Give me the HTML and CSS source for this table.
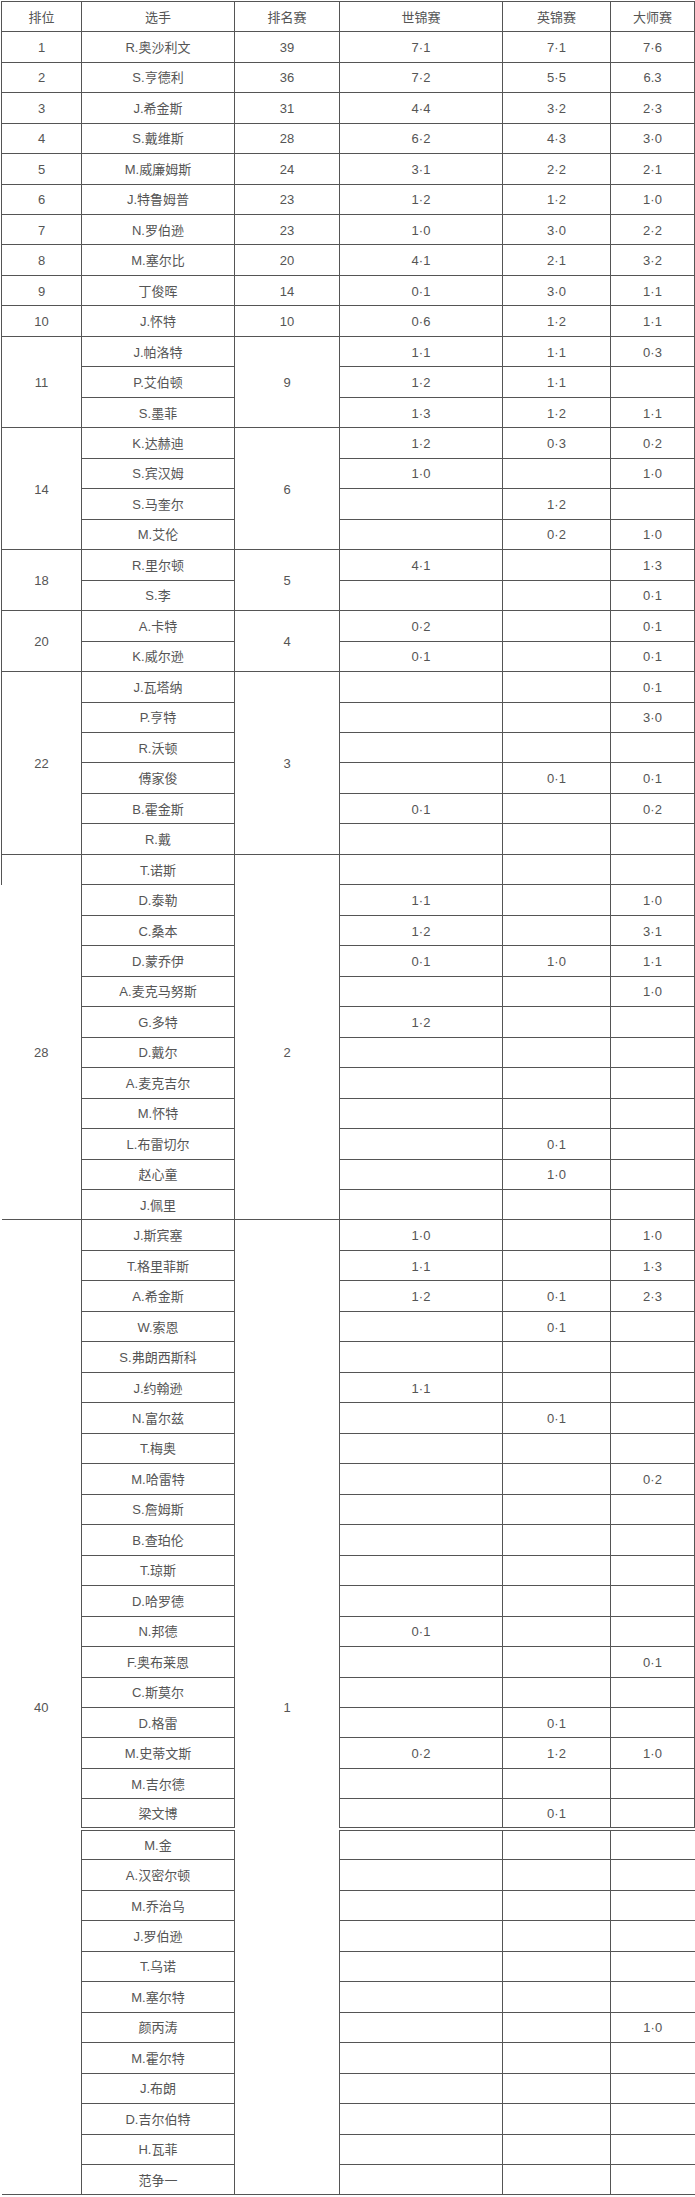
FILE: index.html
```html
<!DOCTYPE html>
<html lang="zh">
<head>
<meta charset="utf-8">
<title>排名赛冠军榜</title>
<link rel="stylesheet" href="styles.css">
</head>
<body>
<table class="rank-table">
  <colgroup>
    <col class="c-rank"><col class="c-player"><col class="c-titles"><col class="c-world"><col class="c-uk"><col class="c-masters">
  </colgroup>
  <thead>
    <tr><th>排位</th><th>选手</th><th>排名赛</th><th>世锦赛</th><th>英锦赛</th><th>大师赛</th></tr>
  </thead>
  <tbody>
    <tr><td>1</td><td>R.奥沙利文</td><td>39</td><td>7·1</td><td>7·1</td><td>7·6</td></tr>
    <tr><td>2</td><td>S.亨德利</td><td>36</td><td>7·2</td><td>5·5</td><td>6.3</td></tr>
    <tr><td>3</td><td>J.希金斯</td><td>31</td><td>4·4</td><td>3·2</td><td>2·3</td></tr>
    <tr><td>4</td><td>S.戴维斯</td><td>28</td><td>6·2</td><td>4·3</td><td>3·0</td></tr>
    <tr><td>5</td><td>M.威廉姆斯</td><td>24</td><td>3·1</td><td>2·2</td><td>2·1</td></tr>
    <tr><td>6</td><td>J.特鲁姆普</td><td>23</td><td>1·2</td><td>1·2</td><td>1·0</td></tr>
    <tr><td>7</td><td>N.罗伯逊</td><td>23</td><td>1·0</td><td>3·0</td><td>2·2</td></tr>
    <tr><td>8</td><td>M.塞尔比</td><td>20</td><td>4·1</td><td>2·1</td><td>3·2</td></tr>
    <tr><td>9</td><td>丁俊晖</td><td>14</td><td>0·1</td><td>3·0</td><td>1·1</td></tr>
    <tr><td>10</td><td>J.怀特</td><td>10</td><td>0·6</td><td>1·2</td><td>1·1</td></tr>

    <tr><td rowspan="3">11</td><td>J.帕洛特</td><td rowspan="3">9</td><td>1·1</td><td>1·1</td><td>0·3</td></tr>
    <tr><td>P.艾伯顿</td><td>1·2</td><td>1·1</td><td></td></tr>
    <tr><td>S.墨菲</td><td>1·3</td><td>1·2</td><td>1·1</td></tr>

    <tr><td rowspan="4">14</td><td>K.达赫迪</td><td rowspan="4">6</td><td>1·2</td><td>0·3</td><td>0·2</td></tr>
    <tr><td>S.宾汉姆</td><td>1·0</td><td></td><td>1·0</td></tr>
    <tr><td>S.马奎尔</td><td></td><td>1·2</td><td></td></tr>
    <tr><td>M.艾伦</td><td></td><td>0·2</td><td>1·0</td></tr>

    <tr><td rowspan="2">18</td><td>R.里尔顿</td><td rowspan="2">5</td><td>4·1</td><td></td><td>1·3</td></tr>
    <tr><td>S.李</td><td></td><td></td><td>0·1</td></tr>

    <tr><td rowspan="2">20</td><td>A.卡特</td><td rowspan="2">4</td><td>0·2</td><td></td><td>0·1</td></tr>
    <tr><td>K.威尔逊</td><td>0·1</td><td></td><td>0·1</td></tr>

    <tr><td rowspan="6">22</td><td>J.瓦塔纳</td><td rowspan="6">3</td><td></td><td></td><td>0·1</td></tr>
    <tr><td>P.亨特</td><td></td><td></td><td>3·0</td></tr>
    <tr><td>R.沃顿</td><td></td><td></td><td></td></tr>
    <tr><td>傅家俊</td><td></td><td>0·1</td><td>0·1</td></tr>
    <tr><td>B.霍金斯</td><td>0·1</td><td></td><td>0·2</td></tr>
    <tr><td>R.戴</td><td></td><td></td><td></td></tr>

    <tr><td class="open-bottom"></td><td>T.诺斯</td><td class="open-bottom"></td><td></td><td></td><td></td></tr>
    <tr><td rowspan="11" class="open-top no-left">28</td><td>D.泰勒</td><td rowspan="11" class="open-top">2</td><td>1·1</td><td></td><td>1·0</td></tr>
    <tr><td>C.桑本</td><td>1·2</td><td></td><td>3·1</td></tr>
    <tr><td>D.蒙乔伊</td><td>0·1</td><td>1·0</td><td>1·1</td></tr>
    <tr><td>A.麦克马努斯</td><td></td><td></td><td>1·0</td></tr>
    <tr><td>G.多特</td><td>1·2</td><td></td><td></td></tr>
    <tr><td>D.戴尔</td><td></td><td></td><td></td></tr>
    <tr><td>A.麦克吉尔</td><td></td><td></td><td></td></tr>
    <tr><td>M.怀特</td><td></td><td></td><td></td></tr>
    <tr><td>L.布雷切尔</td><td></td><td>0·1</td><td></td></tr>
    <tr><td>赵心童</td><td></td><td>1·0</td><td></td></tr>
    <tr><td>J.佩里</td><td></td><td></td><td></td></tr>

    <tr><td rowspan="32" class="no-left">40</td><td>J.斯宾塞</td><td rowspan="32">1</td><td>1·0</td><td></td><td>1·0</td></tr>
    <tr><td>T.格里菲斯</td><td>1·1</td><td></td><td>1·3</td></tr>
    <tr><td>A.希金斯</td><td>1·2</td><td>0·1</td><td>2·3</td></tr>
    <tr><td>W.索恩</td><td></td><td>0·1</td><td></td></tr>
    <tr><td>S.弗朗西斯科</td><td></td><td></td><td></td></tr>
    <tr><td>J.约翰逊</td><td>1·1</td><td></td><td></td></tr>
    <tr><td>N.富尔兹</td><td></td><td>0·1</td><td></td></tr>
    <tr><td>T.梅奥</td><td></td><td></td><td></td></tr>
    <tr><td>M.哈雷特</td><td></td><td></td><td>0·2</td></tr>
    <tr><td>S.詹姆斯</td><td></td><td></td><td></td></tr>
    <tr><td>B.查珀伦</td><td></td><td></td><td></td></tr>
    <tr><td>T.琼斯</td><td></td><td></td><td></td></tr>
    <tr><td>D.哈罗德</td><td></td><td></td><td></td></tr>
    <tr><td>N.邦德</td><td>0·1</td><td></td><td></td></tr>
    <tr><td>F.奥布莱恩</td><td></td><td></td><td>0·1</td></tr>
    <tr><td>C.斯莫尔</td><td></td><td></td><td></td></tr>
    <tr><td>D.格雷</td><td></td><td>0·1</td><td></td></tr>
    <tr><td>M.史蒂文斯</td><td>0·2</td><td>1·2</td><td>1·0</td></tr>
    <tr><td>M.吉尔德</td><td></td><td></td><td></td></tr>
    <tr><td>梁文博</td><td></td><td>0·1</td><td></td></tr>
    <tr class="seam"><td>M.金</td><td></td><td></td><td class="no-right"></td></tr>
    <tr><td>A.汉密尔顿</td><td></td><td></td><td class="no-right"></td></tr>
    <tr><td>M.乔治乌</td><td></td><td></td><td class="no-right"></td></tr>
    <tr><td>J.罗伯逊</td><td></td><td></td><td class="no-right"></td></tr>
    <tr><td>T.乌诺</td><td></td><td></td><td class="no-right"></td></tr>
    <tr><td>M.塞尔特</td><td></td><td></td><td class="no-right"></td></tr>
    <tr><td>颜丙涛</td><td></td><td></td><td class="no-right">1·0</td></tr>
    <tr><td>M.霍尔特</td><td></td><td></td><td class="no-right"></td></tr>
    <tr><td>J.布朗</td><td></td><td></td><td class="no-right"></td></tr>
    <tr><td>D.吉尔伯特</td><td></td><td></td><td class="no-right"></td></tr>
    <tr><td>H.瓦菲</td><td></td><td></td><td class="no-right"></td></tr>
    <tr><td>范争一</td><td></td><td></td><td class="no-right"></td></tr>
  </tbody>
</table>
</body>
</html>
```

FILE: styles.css
```css
html, body {
  margin: 0;
  padding: 0;
  background: #ffffff;
}

body {
  padding: 1px 0 0 1px;
  font-family: "Liberation Sans", "Noto Sans CJK SC", sans-serif;
  font-size: 13px;
  color: #555555;
}

.rank-table {
  border-collapse: collapse;
  table-layout: fixed;
  width: 693px;
  border: 1px solid #555555;
}

.c-rank { width: 80px; }
.c-player { width: 153px; }
.c-titles { width: 105px; }
.c-world { width: 163px; }
.c-uk { width: 108px; }
.c-masters { width: 84px; }

.rank-table tr {
  height: 30.48px;
}

.rank-table th,
.rank-table td {
  border: 1px solid #555555;
  padding: 2px 4px 0;
  text-align: center;
  vertical-align: middle;
  font-weight: normal;
  line-height: 16px;
  white-space: nowrap;
}

.rank-table thead tr {
  height: 30.2px;
}

.rank-table td.open-bottom {
  border-bottom: hidden;
}

.rank-table td.open-top {
  border-top: hidden;
}

.rank-table td.no-left {
  border-left: hidden;
}

.rank-table td.no-right {
  border-right: hidden;
}

.rank-table tr.seam td {
  border-top: 4px double #555555;
}
```
